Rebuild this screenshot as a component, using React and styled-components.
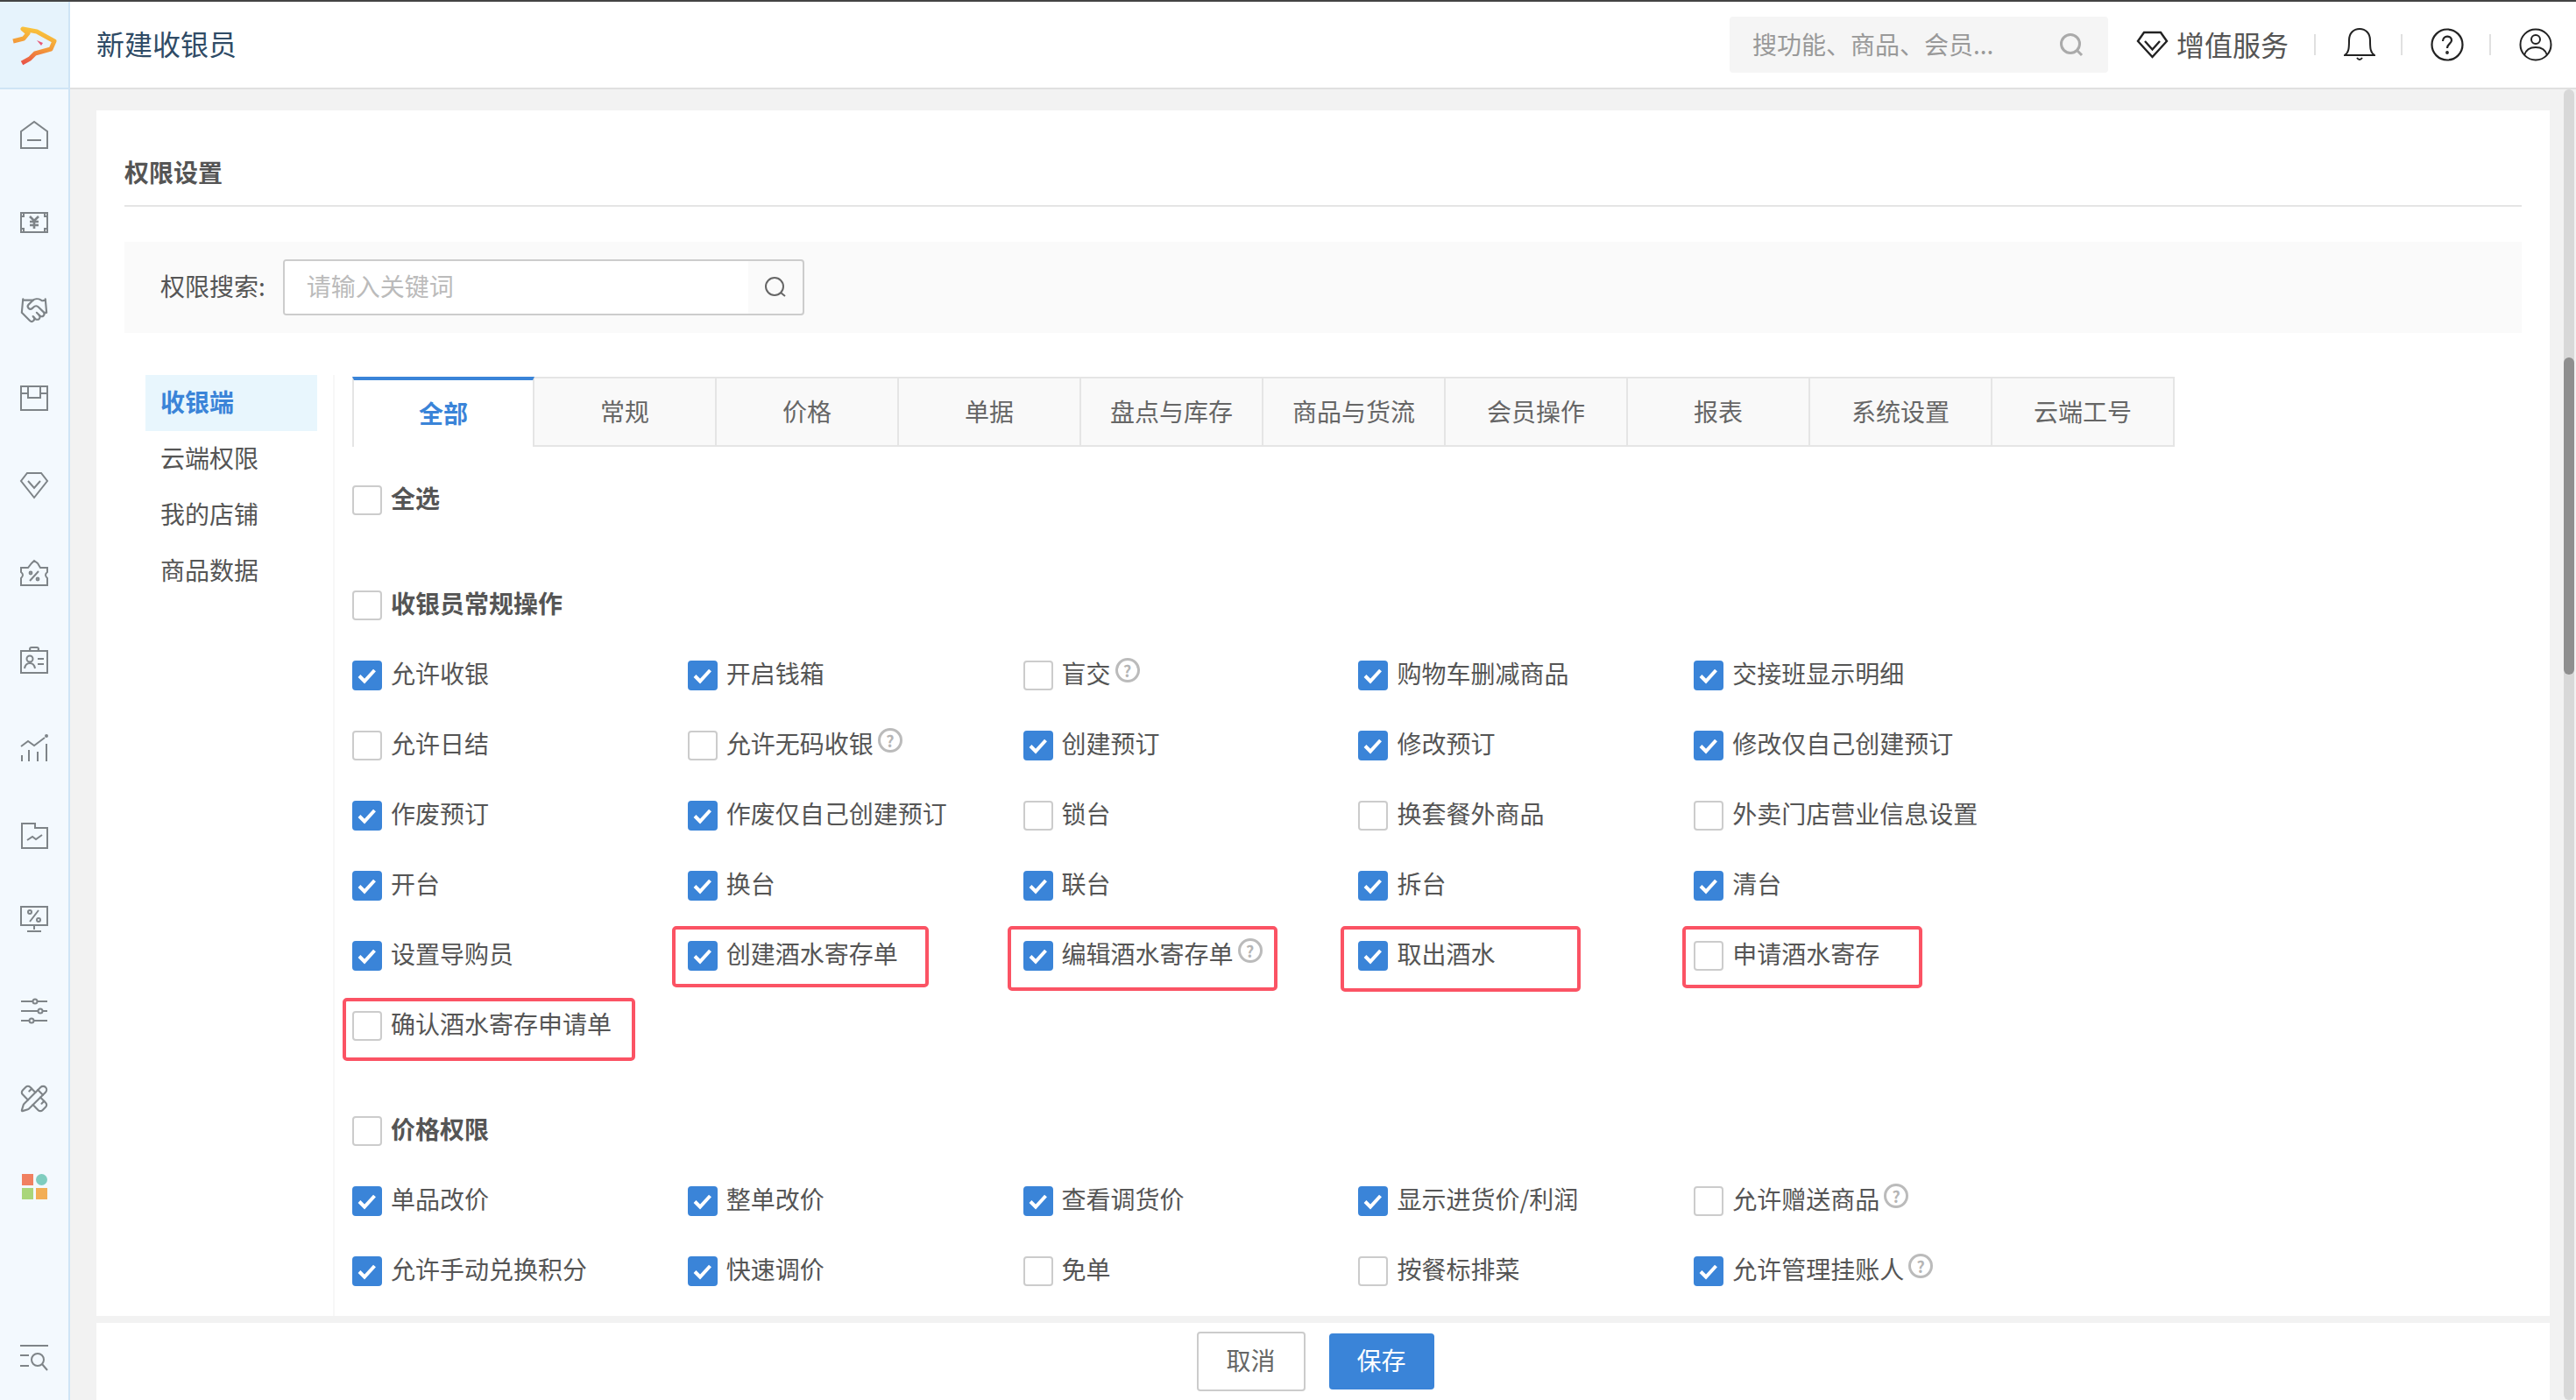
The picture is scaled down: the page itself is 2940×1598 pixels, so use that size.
import React from "react";
import styled, { createGlobalStyle } from "styled-components";
import { Handshake, PencilRuler } from "lucide-react";

const GlobalStyle = createGlobalStyle`
  html, body {
    margin: 0;
    padding: 0;
    background: #f2f2f2;
  }
  * {
    box-sizing: border-box;
  }
  body {
    font-family: "Noto Sans CJK SC", "Noto Sans", sans-serif;
    font-size: 28px;
    color: #555;
  }
`;

const navIcons = [
  <>
    <path d="M1 12 16 1l15 11v19H1z" />
    <path d="M8 22h16" />
  </>,
  <>
    <rect x="1" y="5" width="30" height="22" />
    <path strokeWidth="2.6" d="M11 9l5 5 5-5M16 14v9M11 15h10M11 19h10" />
    <path d="M1 9h3V5M28 5v4h3M1 23h3v4M28 27v-4h3" />
  </>,
  null,
  <>
    <rect x="1" y="3" width="30" height="27" />
    <path d="M1 11h8M23 11h8M9 3v13h14V3" />
  </>,
  <>
    <path d="M8 2h16l7 9-15 19L1 11z" />
    <path d="M9 11l7 8 7-8" />
  </>,
  <>
    <path d="M1 10h8l4-5 3-3 4 3 3 5h8v5q-4 3 0 7v8H1v-8q4-4 0-7z" />
    <path d="M21 14L11 25" />
    <circle cx="12" cy="16" r="1.4" />
    <circle cx="20" cy="23" r="1.4" />
  </>,
  <>
    <rect x="1" y="5" width="30" height="25" />
    <rect x="11" y="1" width="10" height="4" rx="2" />
    <circle cx="11" cy="14" r="3.5" />
    <path d="M5 25q1-6 6-6t6 6M20 14h7M20 20h7" />
  </>,
  <>
    <path d="M1 14l8-6 7 5 12-9" />
    <path d="M2 24v7M10 18v13M20 20v11M30 11v20" />
    <circle cx="30" cy="2" r="1" />
  </>,
  <>
    <path d="M2 2h15v5h14v23H2z" />
    <path d="M8 21l6-4 4 3 7-5" />
  </>,
  <>
    <rect x="1" y="-3" width="30" height="21" />
    <path d="M16 18v5M8 25h16M21 1L11 14" />
    <circle cx="11" cy="3" r="2" />
    <circle cx="21" cy="12" r="2" />
  </>,
  <>
    <path d="M1 5h30M1 16h30M1 27h30" />
    <circle cx="17" cy="5" r="2.5" fill="#f3f9fe" />
    <circle cx="23" cy="16" r="2.5" fill="#f3f9fe" />
    <circle cx="13" cy="27" r="2.5" fill="#f3f9fe" />
  </>,
  null,
];

const rows1 = [
  [
    { t: "允许收银", c: 1 },
    { t: "开启钱箱", c: 1 },
    { t: "盲交", h: 1 },
    { t: "购物车删减商品", c: 1 },
    { t: "交接班显示明细", c: 1 },
  ],
  [
    { t: "允许日结" },
    { t: "允许无码收银", h: 1 },
    { t: "创建预订", c: 1 },
    { t: "修改预订", c: 1 },
    { t: "修改仅自己创建预订", c: 1 },
  ],
  [
    { t: "作废预订", c: 1 },
    { t: "作废仅自己创建预订", c: 1 },
    { t: "锁台" },
    { t: "换套餐外商品" },
    { t: "外卖门店营业信息设置" },
  ],
  [
    { t: "开台", c: 1 },
    { t: "换台", c: 1 },
    { t: "联台", c: 1 },
    { t: "拆台", c: 1 },
    { t: "清台", c: 1 },
  ],
  [
    { t: "设置导购员", c: 1 },
    { t: "创建酒水寄存单", c: 1, mark: [-18, 6, 293, 70] },
    { t: "编辑酒水寄存单", c: 1, h: 1, mark: [-18, 6, 308, 74] },
    { t: "取出酒水", c: 1, mark: [-20, 6, 274, 75] },
    { t: "申请酒水寄存", mark: [-13, 6, 274, 71] },
  ],
  [{ t: "确认酒水寄存申请单", mark: [-11, 8, 334, 72] }],
];

const rows2 = [
  [
    { t: "单品改价", c: 1 },
    { t: "整单改价", c: 1 },
    { t: "查看调货价", c: 1 },
    { t: "显示进货价/利润", c: 1 },
    { t: "允许赠送商品", h: 1 },
  ],
  [
    { t: "允许手动兑换积分", c: 1 },
    { t: "快速调价", c: 1 },
    { t: "免单" },
    { t: "按餐标排菜" },
    { t: "允许管理挂账人", c: 1, h: 1 },
  ],
];

const tabs = ["全部", "常规", "价格", "单据", "盘点与库存", "商品与货流", "会员操作", "报表", "系统设置", "云端工号"];
const menus = ["收银端", "云端权限", "我的店铺", "商品数据"];

function Check({ on }) {
  return (
    <CheckBox $on={on}>
      {on && (
        <svg width="34" height="34" viewBox="0 0 34 34" fill="none">
          <path d="M8 17.500l6 6L25.500 11" stroke="#fff" strokeWidth="4" />
        </svg>
      )}
    </CheckBox>
  );
}

function Perm({ item }) {
  return (
    <Item>
      {item.mark && <Mark $x={item.mark[0]} $y={item.mark[1]} $w={item.mark[2]} $h={item.mark[3]} />}
      <Check on={item.c} />
      <Label>{item.t}</Label>
      {item.h && <Hint>?</Hint>}
    </Item>
  );
}

function Section({ title, rows }) {
  return (
    <SectionBox>
      <Item>
        <Check />
        <Label $bold>{title}</Label>
      </Item>
      <PermGrid>{rows.flat().map((item) => <Perm key={item.t} item={item} />)}</PermGrid>
    </SectionBox>
  );
}

export default function App() {
  return (
    <Page>
      <GlobalStyle />
      <Sidebar>
        <LogoCell>
          <LogoSvg width="78" height="98" viewBox="0 0 78 98" fill="none">
            <defs>
              <linearGradient id="logoFill" x1="40" y1="30" x2="30" y2="74" gradientUnits="userSpaceOnUse">
                <stop offset="0" stopColor="#f9c53c" />
                <stop offset="0.5" stopColor="#f2953a" />
                <stop offset="1" stopColor="#e84a48" />
              </linearGradient>
            </defs>
            <path
              d="M15 45l12-3 5-6-6-5 16 3 20 11-4 9-18 5-6 6-9 5"
              stroke="url(#logoFill)"
              strokeWidth="5"
              strokeLinejoin="round"
            />
            <path d="M42 44l7 3-2 3z" fill="#e85a78" />
          </LogoSvg>
        </LogoCell>
        <NavList>
          {navIcons.map((icon, i) => (
            <NavItem key={i}>
              {i === 2 ? (
                <Handshake size={34} color="#7e8488" strokeWidth={1.5} />
              ) : i === 11 ? (
                <PencilRuler size={34} color="#7e8488" strokeWidth={1.5} />
              ) : (
                <NavSvg viewBox="0 0 32 32">{icon}</NavSvg>
              )}
            </NavItem>
          ))}
          <NavItem>
            <AppsGrid>
              <AppDot $color="#f08060" />
              <AppDot $color="#7fcdbf" $round />
              <AppDot $color="#a9d67a" />
              <AppDot $color="#f2ae55" />
            </AppsGrid>
          </NavItem>
          <BottomItem>
            <NavSvg viewBox="0 0 32 32">
              <path d="M0 2h32M0 13h10M0 25h10" />
              <circle cx="20" cy="18" r="7" />
              <path d="M25 23l6 7" />
            </NavSvg>
          </BottomItem>
        </NavList>
      </Sidebar>
      <Main>
        <Header>
          <HeaderTitle>新建收银员</HeaderTitle>
          <GlobalSearch>
            <span>搜功能、商品、会员...</span>
            <svg width="28" height="28" viewBox="0 0 28 28" fill="none" stroke="#aaa" strokeWidth="3">
              <circle cx="13" cy="13" r="10.500" />
              <path d="M20 20l6 6" />
            </svg>
          </GlobalSearch>
          <ServiceLink>
            <svg width="37" height="32" viewBox="0 0 37 32" fill="none" stroke="#222" strokeWidth="2.400">
              <path d="M9 2h19l7 10-16.500 18L2 12z" />
              <path d="M10 12l8.500 9.500L27 12" />
            </svg>
            <span>增值服务</span>
          </ServiceLink>
          <ToolSep />
          <ToolIcon $w={36}>
            <svg width="36" height="38" viewBox="0 0 36 38" fill="none" stroke="#222" strokeWidth="2">
              <path d="M1 31c5-3 5-9 5-17C6 6 11 1 18 1s12 5 12 13c0 8 0 14 5 17z" />
              <path d="M15 34q3 4 6 0" />
            </svg>
          </ToolIcon>
          <ToolSep />
          <ToolIcon $w={38}>
            <svg width="38" height="38" viewBox="0 0 38 38" fill="none" stroke="#222" strokeWidth="2.200">
              <circle cx="19" cy="19" r="17.500" />
              <path d="M14 15c0-7 10-7 10-1 0 4-5 4-5 9" />
              <circle cx="19" cy="28" r="0.800" />
            </svg>
          </ToolIcon>
          <ToolSep />
          <ToolIcon $w={38}>
            <svg width="38" height="38" viewBox="0 0 38 38" fill="none" stroke="#222" strokeWidth="2">
              <circle cx="19" cy="19" r="17.500" />
              <circle cx="19" cy="13" r="5" />
              <path d="M6 31c2-7 7-9 13-9s11 2 13 9" />
            </svg>
          </ToolIcon>
        </Header>
        <Body>
          <Content>
            <Card>
              <CardTitle>权限设置</CardTitle>
              <FilterBar>
                <FilterLabel>权限搜索:</FilterLabel>
                <SearchField>
                  <SearchInput placeholder="请输入关键词" />
                  <SearchButton>
                    <svg width="26" height="26" viewBox="0 0 26 26" fill="none" stroke="#666" strokeWidth="2">
                      <circle cx="12" cy="12" r="10" />
                      <path d="M19 19l5 4" />
                    </svg>
                  </SearchButton>
                </SearchField>
              </FilterBar>
              <Panel>
                <SideMenu>
                  {menus.map((m, i) => (
                    <MenuItem key={m} $active={i === 0}>{m}</MenuItem>
                  ))}
                </SideMenu>
                <PermArea>
                  <TabRow>
                    {tabs.map((t, i) => (
                      <Tab key={t} $active={i === 0}>{t}</Tab>
                    ))}
                  </TabRow>
                  <SelectAll>
                    <Item>
                      <Check />
                      <Label $bold>全选</Label>
                    </Item>
                  </SelectAll>
                  <Section title="收银员常规操作" rows={rows1} />
                  <Section title="价格权限" rows={rows2} />
                </PermArea>
              </Panel>
            </Card>
            <Footer>
              <CancelButton>取消</CancelButton>
              <SaveButton>保存</SaveButton>
            </Footer>
          </Content>
          <ScrollTrack>
            <ScrollThumb />
          </ScrollTrack>
        </Body>
      </Main>
    </Page>
  );
}

const Page = styled.div`
  display: flex;
  width: 2940px;
  height: 1598px;
  overflow: hidden;
  border-top: 2px solid #444;
`;

const Sidebar = styled.aside`
  display: flex;
  flex-direction: column;
  width: 80px;
  flex-shrink: 0;
  background: #f3f9fe;
  border-right: 2px solid #cfe4f5;
`;

const LogoCell = styled.div`
  height: 100px;
  flex-shrink: 0;
  background: #e6f3fc;
  border-bottom: 2px solid #cfe4f5;
`;

const LogoSvg = styled.svg`
  display: block;
  filter: blur(0.7px);
`;

const NavList = styled.div`
  display: flex;
  flex: 1;
  flex-direction: column;
  padding-top: 2px;
`;

const NavItem = styled.div`
  display: flex;
  align-items: center;
  justify-content: center;
  height: 100px;
  flex-shrink: 0;
`;

const BottomItem = styled(NavItem)`
  margin-top: auto;
  margin-bottom: -2px;
`;

const NavSvg = styled.svg`
  width: 32px;
  height: 32px;
  fill: none;
  stroke: #7e8488;
  stroke-width: 2;
  overflow: visible;
`;

const AppsGrid = styled.div`
  display: grid;
  grid-template-columns: 13px 13px;
  gap: 3px;
`;

const AppDot = styled.i`
  display: block;
  width: 13px;
  height: 13px;
  background: ${(p) => p.$color};
  border-radius: ${(p) => (p.$round ? "50%" : "0")};
`;

const Main = styled.div`
  display: flex;
  flex-direction: column;
  flex: 1;
  min-width: 0;
`;

const Header = styled.header`
  display: flex;
  align-items: center;
  height: 100px;
  flex-shrink: 0;
  padding: 0 27px 0 30px;
  background: #fff;
  border-bottom: 2px solid #e0e0e0;
`;

const HeaderTitle = styled.h1`
  margin: 0 auto 4px 0;
  font-size: 32px;
  font-weight: 400;
  color: #2f4b66;
`;

const GlobalSearch = styled.div`
  display: flex;
  align-items: center;
  justify-content: space-between;
  width: 432px;
  height: 64px;
  padding: 0 28px 0 26px;
  background: #f5f5f5;
  border-radius: 4px;
  color: #999;
  font-size: 28px;
  span {
    margin-bottom: 2px;
  }
`;

const ServiceLink = styled.div`
  display: flex;
  align-items: center;
  gap: 9px;
  margin-left: 32px;
  font-size: 32px;
  color: #555;
  span {
    margin-bottom: 3px;
  }
`;

const ToolSep = styled.i`
  width: 2px;
  height: 24px;
  margin: 0 32px 0 29px;
  background: #e0e0e0;
`;

const ToolIcon = styled.div`
  display: flex;
  width: ${(p) => p.$w}px;
  justify-content: center;
`;

const Body = styled.div`
  display: flex;
  flex: 1;
  min-height: 0;
`;

const Content = styled.div`
  display: flex;
  flex-direction: column;
  gap: 8px;
  width: 2800px;
  margin-left: 30px;
  padding-top: 24px;
`;

const Card = styled.section`
  height: 1376px;
  padding: 0 32px;
  overflow: hidden;
  background: #fff;
`;

const CardTitle = styled.h2`
  display: flex;
  align-items: center;
  height: 110px;
  margin: 0;
  padding-top: 32px;
  font-size: 28px;
  font-weight: 700;
  color: #555;
  border-bottom: 2px solid #e5e5e5;
`;

const FilterBar = styled.div`
  display: flex;
  align-items: center;
  gap: 20px;
  height: 104px;
  margin-top: 40px;
  padding-left: 41px;
  background: #fafafa;
`;

const FilterLabel = styled.label`
  margin-bottom: 4px;
  font-size: 28px;
  color: #555;
`;

const SearchField = styled.div`
  display: flex;
  width: 595px;
  height: 64px;
  background: #fafafa;
  border: 2px solid #ccc;
  border-radius: 4px;
  overflow: hidden;
`;

const SearchInput = styled.input`
  width: 529px;
  border: none;
  outline: none;
  padding: 0 25px 4px;
  font: inherit;
  font-size: 28px;
  background: #fff;
  &::placeholder {
    color: #bbb;
  }
`;

const SearchButton = styled.div`
  display: flex;
  flex: 1;
  align-items: center;
  justify-content: center;
`;

const Panel = styled.div`
  display: flex;
  margin-top: 48px;
  min-height: 1100px;
`;

const SideMenu = styled.nav`
  width: 216px;
  margin-left: 24px;
  padding-right: 18px;
  border-right: 2px solid #f7f7f7;
  flex-shrink: 0;
`;

const MenuItem = styled.div`
  display: flex;
  align-items: center;
  height: 64px;
  padding: 0 0 4px 17px;
  font-size: 28px;
  font-weight: ${(p) => (p.$active ? 700 : 400)};
  color: ${(p) => (p.$active ? "#3a84d8" : "#555")};
  background: ${(p) => (p.$active ? "#e8f6fd" : "transparent")};
`;

const PermArea = styled.div`
  flex: 1;
  margin-left: 20px;
  padding-top: 2px;
`;

const TabRow = styled.div`
  display: flex;
`;

const Tab = styled.div`
  display: flex;
  align-items: center;
  justify-content: center;
  width: 208px;
  height: 80px;
  padding-bottom: 2px;
  font-size: 28px;
  font-weight: ${(p) => (p.$active ? 700 : 400)};
  color: ${(p) => (p.$active ? "#3a84d8" : "#666")};
  background: ${(p) => (p.$active ? "#fff" : "#f9f9f9")};
  border-top: ${(p) => (p.$active ? "4px solid #3a84d8" : "2px solid #e5e5e5")};
  border-right: 2px solid #e5e5e5;
  border-bottom: ${(p) => (p.$active ? "none" : "2px solid #e5e5e5")};
  border-left: ${(p) => (p.$active ? "2px solid #e5e5e5" : "none")};
`;

const SelectAll = styled.div`
  margin-top: 21px;
`;

const SectionBox = styled.div`
  margin-top: 40px;
`;

const PermGrid = styled.div`
  display: grid;
  grid-template-columns: repeat(5, 382.8px);
  grid-auto-rows: 80px;
`;

const Item = styled.div`
  position: relative;
  display: flex;
  align-items: center;
  height: 80px;
  font-size: 28px;
  color: #555;
  white-space: nowrap;
`;

const Label = styled.span`
  margin-bottom: 6px;
  font-weight: ${(p) => (p.$bold ? 700 : 400)};
`;

const CheckBox = styled.span`
  display: block;
  width: 34px;
  height: 34px;
  margin-right: 10px;
  flex-shrink: 0;
  border-radius: 4px;
  background: ${(p) => (p.$on ? "#3a84d8" : "#fff")};
  border: 2px solid ${(p) => (p.$on ? "#3a84d8" : "#ccc")};
  svg {
    display: block;
    margin: -2px;
  }
`;

const Hint = styled.i`
  display: inline-flex;
  align-items: center;
  justify-content: center;
  width: 28px;
  height: 28px;
  margin: -12px 0 0 5px;
  border: 3px solid #bbb;
  border-radius: 50%;
  font-size: 18px;
  font-weight: 700;
  font-style: normal;
  line-height: 1;
  color: #b5b5b5;
`;

const Mark = styled.span`
  position: absolute;
  left: ${(p) => p.$x}px;
  top: ${(p) => p.$y}px;
  width: ${(p) => p.$w}px;
  height: ${(p) => p.$h}px;
  border: 4px solid #fb5364;
  border-radius: 5px;
`;

const Footer = styled.footer`
  display: flex;
  flex: 1;
  align-items: center;
  justify-content: center;
  gap: 27px;
  padding: 0 18px 0 0;
  background: #fff;
`;

const CancelButton = styled.button`
  width: 124px;
  height: 68px;
  padding: 0 0 4px;
  font: inherit;
  font-size: 28px;
  color: #666;
  background: #fff;
  border: 2px solid #ccc;
  border-radius: 4px;
`;

const SaveButton = styled.button`
  width: 120px;
  height: 64px;
  padding: 0 0 4px;
  font: inherit;
  font-size: 28px;
  color: #fff;
  background: #3a84d8;
  border: none;
  border-radius: 4px;
`;

const ScrollTrack = styled.div`
  width: 12px;
  margin-left: 16px;
  background: #d8d8d8;
  border-radius: 6px;
`;

const ScrollThumb = styled.div`
  height: 362px;
  margin-top: 306px;
  background: #8f8f8f;
  border-radius: 6px;
`;
